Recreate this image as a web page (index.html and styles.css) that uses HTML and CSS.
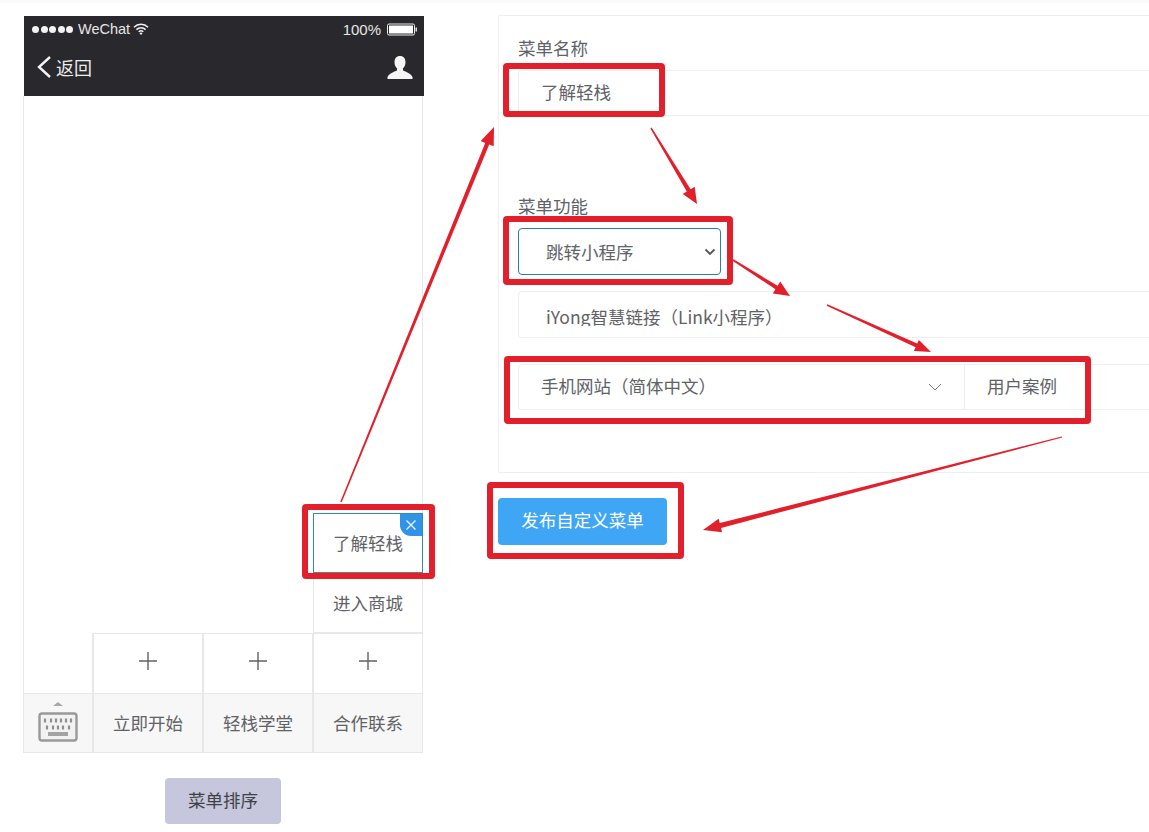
FILE: index.html
```html
<!DOCTYPE html>
<html lang="zh">
<head>
<meta charset="utf-8">
<title>自定义菜单</title>
<link rel="stylesheet" href="styles.css">
</head>
<body>
<main class="page">
  <section class="left">
    <div class="phone">
      <header class="phone-head">
        <div class="status">
          <span class="dots"><i></i><i></i><i></i><i></i><i></i></span>
          <span class="carrier">WeChat</span>
          <svg class="wifi" width="16" height="12" viewBox="0 0 16 12"><path d="M1 4.2a10 10 0 0 1 14 0M3.4 6.6a6.6 6.6 0 0 1 9.2 0M5.7 8.8a3.4 3.4 0 0 1 4.6 0" fill="none" stroke="#f2f2f2" stroke-width="1.5"/><path d="M8 12 6.5 10.3a2.2 2.2 0 0 1 3 0z" fill="#f2f2f2"/></svg>
          <span class="status-gap"></span>
          <span class="pct">100%</span>
          <svg class="battery" width="32" height="13" viewBox="0 0 32 13"><rect x="1.5" y="1" width="27" height="11" rx="1.5" fill="none" stroke="#eee" stroke-width="1"/><rect x="3" y="2.5" width="24" height="8" fill="#fff"/><rect x="29.500" y="4.500" width="1.500" height="4" fill="#ddd"/></svg>
        </div>
        <div class="nav">
          <svg class="back" width="16" height="24" viewBox="0 0 16 24"><path d="M14 2 3 12l11 10" fill="none" stroke="#f4f4f4" stroke-width="2.400"/></svg>
          <span class="back-text">返回</span>
          <span class="status-gap"></span>
          <svg class="person" width="26" height="25" viewBox="0 0 26 25"><path d="M13 1c3.600 0 5.500 2.600 5.500 6 0 2.700-1 5-2.500 6.300v2.200c3 1.300 8 3 9.500 6.500v2H.5v-2c1.500-3.500 6.500-5.200 9.500-6.500v-2.200C8.500 12 7.500 9.700 7.500 7c0-3.400 1.900-6 5.500-6z" fill="#f5f5f5"/></svg>
        </div>
      </header>
      <div class="phone-body">
        <div class="sub-col">
          <div class="sub-item sub-active">了解轻栈<span class="close"><svg width="12" height="12" viewBox="0 0 12 12"><path d="M1.500 1.500l9 9M10.500 1.500l-9 9" stroke="#e8f3ff" stroke-width="1.400" fill="none"/></svg></span></div>
          <div class="sub-item">进入商城</div>
        </div>
        <div class="plus-row">
          <div class="key-spacer"></div>
          <div class="plus-cell"><svg width="18" height="18" viewBox="0 0 18 18"><path d="M9 0v18M0 9h18" stroke="#5f6266" stroke-width="1.400"/></svg></div>
          <div class="plus-cell"><svg width="18" height="18" viewBox="0 0 18 18"><path d="M9 0v18M0 9h18" stroke="#5f6266" stroke-width="1.400"/></svg></div>
          <div class="plus-cell"><svg width="18" height="18" viewBox="0 0 18 18"><path d="M9 0v18M0 9h18" stroke="#5f6266" stroke-width="1.400"/></svg></div>
        </div>
        <div class="tab-row">
          <div class="key-cell">
            <svg width="40" height="42" viewBox="0 0 40 42"><path d="M20 1l5 4H15z" fill="#a9a9a9"/><rect x="1.500" y="12.500" width="37" height="27" rx="2.500" fill="#f2f2f2" stroke="#999" stroke-width="2.400"/><path d="M7 17.500v4M13 17.500v4M18 17.500v4M23 17.500v4M28 17.500v4M33 17.500v4M9 24.500v4M15 24.500v4M20 24.500v4M25 24.500v4M31 24.500v4" stroke="#8f8f8f" stroke-width="2.200"/><rect x="10" y="31" width="20" height="4" fill="#a3a3a3"/></svg>
          </div>
          <div class="tab-cell">立即开始</div>
          <div class="tab-cell">轻栈学堂</div>
          <div class="tab-cell">合作联系</div>
        </div>
      </div>
    </div>
    <button class="sort-btn" type="button">菜单排序</button>
  </section>

  <section class="right">
    <div class="card">
      <div class="label">菜单名称</div>
      <div class="field field-name">了解轻栈</div>
      <div class="label label-func">菜单功能</div>
      <div class="field-select">跳转小程序<svg width="12" height="8" viewBox="0 0 12 8"><path d="M1.500 1.500 6 6l4.500-4.500" fill="none" stroke="#555" stroke-width="1.800"/></svg></div>
      <div class="field field-app"><span class="clip">iYong智慧链接（Link小程序）</span></div>
      <div class="group">
        <div class="group-select">手机网站（简体中文）<svg width="14" height="8" viewBox="0 0 14 8"><path d="M1 1l6 6 6-6" fill="none" stroke="#777" stroke-width="1"/></svg></div>
        <div class="group-input">用户案例</div>
      </div>
    </div>
    <button class="publish-btn" type="button">发布自定义菜单</button>
  </section>
</main>

<svg class="notes" width="1149" height="832" viewBox="0 0 1149 832" aria-hidden="true">
  <g class="note-boxes">
    <rect x="305" y="507" width="127" height="69" rx="1"/>
    <rect x="506" y="66" width="156" height="48" rx="1"/>
    <rect x="506" y="219" width="224" height="63" rx="1"/>
    <rect x="507" y="359" width="581" height="62" rx="1"/>
    <rect x="490" y="485" width="191" height="71" rx="1"/>
  </g>
  <g class="note-arrows">
    <polygon points="341.700,502.300 489.200,144.500 493.700,146.300 494,127 480.700,141 485.200,142.900 340.300,501.700"/>
    <polygon points="650.400,128.400 686.800,191.400 682.700,193.900 697,204 694.700,186.700 690.600,189.200 651.600,127.600"/>
    <polygon points="732.500,260.800 775.400,289.200 772.800,293.400 790,296 780.200,281.600 777.600,285.800 733.500,259.200"/>
    <polygon points="826.700,305.700 915.600,347.200 913.900,350.900 931,352 918.900,339.900 917.200,343.600 827.300,304.300"/>
    <polygon points="1061.800,436.400 719.800,523.100 718.600,518.700 703,530 722.200,532.300 721,527.900 1062.200,437.600"/>
  </g>
</svg>
</body>
</html>
```
FILE: styles.css
```css
* { box-sizing: border-box; }
html, body { margin: 0; padding: 0; background: #fff; }
body {
  width: 1149px;
  height: 832px;
  overflow: hidden;
  position: relative;
  border-top: 3px solid #fafafa;
  font-family: "Noto Sans CJK SC", "Liberation Sans", sans-serif;
  color: #606266;
}
.page { display: flex; padding: 13px 0 0 23px; }

.left { width: 401px; flex: none; display: flex; flex-direction: column; align-items: flex-start; }
.phone { width: 400px; }
.phone-head { width: 400px; height: 80px; margin-left: 1px; background: #29282c; color: #f2f2f2; }
.status { display: flex; align-items: center; height: 26px; padding: 0 6px 0 8px; font-family: "Liberation Sans", sans-serif; font-size: 14.500px; }
.dots { display: flex; gap: 1.500px; margin-right: 5px; }
.dots i { width: 7px; height: 7px; border-radius: 50%; background: #f2f2f2; }
.carrier { color: #e6e6e6; }
.wifi { margin-left: 3px; }
.status-gap { flex: 1; }
.pct { color: #e6e6e6; font-size: 15px; margin-right: 5px; }
.nav { display: flex; align-items: center; height: 54px; padding: 0 11px 4px 12px; }
.back-text { margin-left: 4px; font-size: 18px; color: #ececec; }

.phone-body { height: 657px; display: flex; flex-direction: column; justify-content: flex-end; border: 1px solid #e8e8e8; border-top: 0; }
.sub-col { align-self: flex-end; width: 109px; }
.sub-item { position: relative; height: 60px; display: flex; align-items: center; justify-content: center; font-size: 17.500px; border-left: 1px solid #e8e8e8; border-bottom: 1px solid #e8e8e8; }
.sub-active { border: 1px solid #2a8fb0; border-bottom-color: #777; margin-right: -1px; padding-bottom: 2px; }
.close { position: absolute; top: 0; right: 0; width: 22px; height: 22px; background: #2f93e8; border-bottom-left-radius: 11px; display: flex; align-items: center; justify-content: center; }
.plus-row, .tab-row { display: flex; }
.plus-row { height: 60px; }
.tab-row { height: 59px; background: #f7f7f7; border-top: 1px solid #e8e8e8; }
.key-spacer, .key-cell { width: 68px; flex: none; }
.key-spacer { background: #fff; }
.key-cell { display: flex; align-items: center; justify-content: center; padding: 0 0 2px 0; }
.plus-cell, .tab-cell { width: 110px; flex: none; display: flex; align-items: center; justify-content: center; border-left: 2px solid #e8e8e8; }
.plus-row .plus-cell { border-top: 1px solid #e8e8e8; padding-bottom: 6px; }
.tab-cell { font-size: 17.500px; padding-bottom: 2px; }

.sort-btn { margin: 25px 0 0 142px; width: 116px; height: 46px; border: 0; border-radius: 4px; padding: 0 0 4px; background: #c6c6dc; color: #3f4148; font: 17.500px "Noto Sans CJK SC", sans-serif; }

.right { margin: -1px 0 0 74px; flex: none; width: 760px; }
.card { height: 458px; border: 1px solid #ebeef5; padding: 20px 19px 0; }
.label { height: 34px; line-height: 24px; font-size: 17.500px; }
.label-func { margin-top: 78px; height: 34px; }
.field { height: 46px; border: 1px solid #eceef2; border-radius: 4px; padding: 0 0 4px 22px; display: flex; align-items: center; font-size: 17.500px; background: #fff; }
.field-select { width: 203px; height: 47px; border: 1px solid #2a7ea8; border-radius: 4px; padding: 0 4px 0 27px; display: flex; align-items: center; justify-content: space-between; font-size: 17.500px; }
.field-app { height: 47px; margin-top: 16px; padding: 0 0 0 27px; }
.clip { display: block; height: 22px; overflow: hidden; line-height: 25px; }
.group { display: flex; height: 46px; margin-top: 26px; font-size: 17.500px; }
.group-select { width: 447px; flex: none; display: flex; align-items: center; justify-content: space-between; padding: 0 22px 4px 22px; border: 1px solid #eceef2; border-radius: 4px 0 0 4px; }
.group-select svg { margin-top: 4px; }
.group-input { flex: 1; display: flex; align-items: center; padding: 0 0 4px 22px; border: 1px solid #eceef2; border-left: 0; }

.publish-btn { display: block; margin-top: 25px; width: 169px; height: 47px; border: 0; border-radius: 4px; padding: 0 0 4px; background: #3ea6f5; color: #fff; font: 17.500px "Noto Sans CJK SC", sans-serif; }

.notes { position: absolute; left: 0; top: -3px; pointer-events: none; }
.note-boxes rect { fill: none; stroke: #e2202c; stroke-width: 6; }
.note-arrows polygon { fill: #e2202c; }
```
